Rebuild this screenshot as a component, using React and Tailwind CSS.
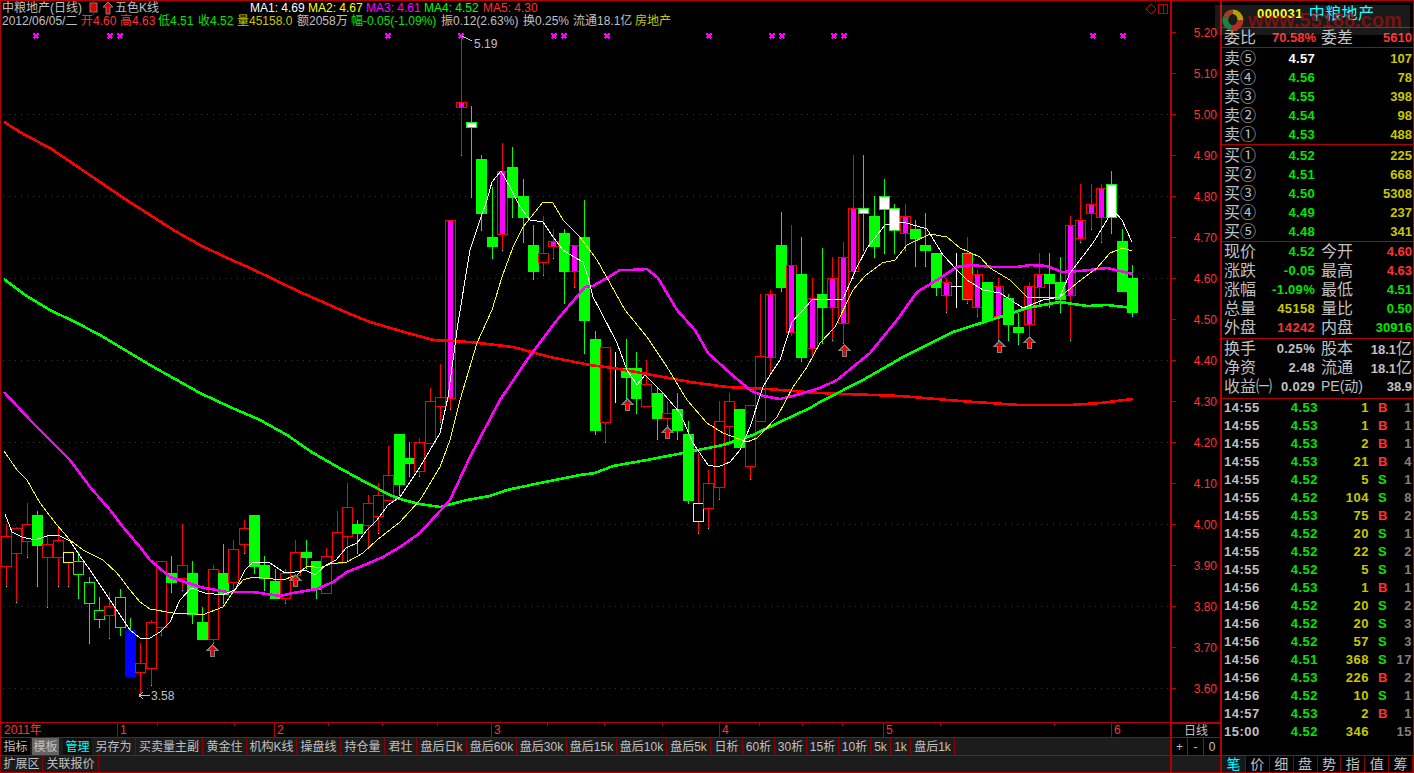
import React from "react";

const C = [
["r",524,536,566,586],["r",527,528,553,602],["r",503,524,541,557],["g",511,515,545,586],["r",535,544,557,607],["r",528,540,557,586],["y",552,552,562,586],["h",552,561,574,598],["h",577,582,603,643],["h",597,610,619,627],
["r",592,606,615,638],["h",589,597,627,635],["b",618,630,676,676],["r",643,663,672,695],["r",620,622,668,685],["r",561,561,627,635],["g",556,573,582,592],["r",524,565,578,590],["g",561,573,614,623],["g",607,622,639,639],
["r",565,569,639,643],["g",544,573,594,603],["r",540,549,582,592],["r",520,528,544,553],["g",515,515,566,573],["g",556,565,578,590],["g",569,581,598,598],["r",569,573,598,603],["r",540,552,575,575],["g",540,552,557,568],
["g",561,561,589,598],["r",548,556,593,593],["r",511,532,563,563],["r",483,507,536,560],["g",520,524,533,553],["r",495,503,525,548],["r",483,495,516,533],["r",446,475,500,500],["g",434,434,484,495],["g",442,458,463,476],
["r",438,442,471,476],["r",388,401,443,443],["r",364,397,406,422],["m",220,220,398,409],["m",38,102,107,155],["w",106,122,127,197],["g",155,159,213,230],["g",187,237,246,258],["m",143,171,234,250],["g",147,167,197,217],
["g",179,196,217,242],["g",225,245,271,279],["r",216,253,262,275],["m",229,241,246,258],["g",229,233,271,303],["m",245,245,271,287],["g",200,237,320,353],["g",331,339,430,434],["r",347,347,422,442],["c",352,368,368,402],
["g",339,368,377,398],["g",352,368,398,413],["r",360,384,406,406],["g",388,393,418,439],["r",401,413,418,425],["g",393,409,430,439],["g",421,434,500,503],["y",453,503,521,533],["r",470,483,508,528],["r",401,421,487,499],
["r",393,401,426,442],["g",409,409,447,447],["r",405,405,466,479],["r",294,356,421,421],["m",290,294,357,373],["g",212,245,287,291],["m",225,265,332,335],["g",237,274,357,361],["m",278,298,348,357],["g",248,294,307,343],
["m",257,278,307,340],["m",242,257,323,343],["m",155,208,271,278],["w",155,208,213,250],["g",196,216,246,257],["w",179,196,209,253],["w",204,208,230,253],["m",204,216,233,250],["g",220,229,238,266],["g",213,245,250,266],
["g",253,253,287,295],["m",278,282,295,312],["c",253,286,286,307],["R",237,253,299,303],["m",270,274,307,316],["g",282,282,320,320],["m",278,286,316,340],["g",294,298,324,340],["g",313,327,332,344],["m",282,286,324,336],
["m",253,274,287,303],["g",253,274,283,307],["g",257,282,299,312],["m",216,225,295,340],["m",184,220,238,242],["m",184,204,213,229],["m",184,188,217,242],["w",171,184,217,233],["g",229,241,291,291],["g",265,278,312,316],
];

const ma1 = "5,514 12,532 22,537 35,540 50,535 60,536 70,541 80,556 90,570 100,585 110,600 120,615 130,630 140,638 150,638 160,632 170,622 180,600 191,588 205,593 222,595 235,590 245,570 253,562 270,563 285,573 295,572 305,570 315,575 326,565 336,560 346,548 357,543 367,530 377,520 388,505 400,497 420,467 440,433 448,397 458,323 470,250 480,220 487,200 492,182 501,171 510,187 520,207 530,220 543,222 553,237 563,250 574,257 583,262 588,277 593,297 600,310 617,343 627,370 637,385 645,375 663,393 680,413 693,443 708,465 718,467 730,462 740,450 750,427 763,387 772,372 780,360 792,322 812,300 843,299 857,267 867,248 885,225 903,222 927,229 943,255 957,270 967,280 983,290 1000,293 1023,308 1043,300 1060,297 1070,273 1093,243 1113,210 1122,220 1132,242";
const ma2 = "4,451 17,470 27,480 40,503 57,525 70,540 83,550 103,560 117,573 130,590 140,602 150,609 173,613 190,613 202,615 223,607 233,592 243,580 253,577 283,580 297,575 307,566 320,568 330,564 347,562 363,553 377,540 400,522 420,500 440,467 450,440 460,400 477,343 492,310 502,277 513,247 523,227 543,202 553,203 563,220 580,237 597,260 610,283 625,310 647,337 667,367 687,400 707,423 723,433 747,442 757,438 777,417 793,387 807,367 820,343 835,327 853,290 865,276 882,263 895,260 907,245 930,234 947,237 960,248 980,257 990,268 1010,280 1027,297 1060,297 1077,283 1097,268 1110,253 1123,248 1132,251";
const ma3 = "4,392 30,420 50,440 70,460 90,487 110,510 123,527 140,547 150,560 170,577 200,587 227,592 253,592 280,596 293,593 317,589 333,582 347,572 367,564 383,557 400,547 420,533 450,500 470,457 500,400 527,360 557,320 585,287 593,286 607,278 620,270 630,270 647,269 658,278 677,310 695,330 708,353 730,373 750,390 763,396 780,399 797,395 820,388 837,380 870,353 897,320 917,292 937,280 957,267 970,265 993,267 1017,267 1030,265 1047,266 1062,272 1080,271 1107,268 1133,274";
const ma4 = "4,279 25,295 50,310 75,322 100,335 125,350 150,365 175,379 200,393 230,407 260,420 287,435 313,453 343,470 367,483 390,495 403,500 420,504 440,507 467,500 490,496 507,490 540,483 580,475 595,473 613,466 647,460 683,453 723,445 753,435 780,422 810,408 820,402 863,380 903,357 953,332 1000,317 1027,308 1060,302 1087,306 1107,305 1133,308";
const ma5 = "4,122 25,135 50,148 75,165 100,182 125,199 150,215 175,231 200,245 225,257 250,268 275,280 300,292 325,303 350,314 370,322 390,328 433,340 470,342 513,347 550,357 590,365 613,368 647,374 690,382 727,387 767,389 820,393 900,396 960,401 1020,405 1070,405 1100,403 1133,399";

const marks = [36,110,120,388,461,554,564,607,709,772,782,834,844,1093,1123];
const arrows = [[212,645],[295,575],[627,399],[667,427],[844,345],[999,341],[1029,337]];
const grid = [114,196,278,360,442,524,606,688];
const prices = ["5.20","5.10","5.00","4.90","4.80","4.70","4.60","4.50","4.40","4.30","4.20","4.10","4.00","3.90","3.80","3.70","3.60"];

function Candle({ d, i }) {
  const [k, hi, top, bot, lo] = d;
  const x = Math.round(6 + 10.33 * i);
  const wick = k === "r" || k === "m" || k === "y" || k === "R" ? "#ff0000" : k === "c" ? "#ffffff" : "#00ff00";
  const l = x - 5;
  const h = bot - top + 1;
  const outline = { r: "#ff0000", m: "#ff0000", y: "#ffff00", h: "#00ff00", w: "#00ff00", R: "#00ff00", g: "#00ff00", b: "#0000ff" }[k];
  const inner = { r: "#000000", m: "#000000", y: "#000000", h: "#000000", w: "#ffffff", R: "#ff0000" }[k];
  return (
    <g>
      <rect x={x} y={hi} width="1" height={lo - hi + 1} fill={wick} />
      {lo > bot + 3 && k !== "c" && <rect x={x} y={lo} width="1" height="1" fill="#00ffff" />}
      {outline && <rect x={l} y={top} width="11" height={h} fill={outline} />}
      {inner && <rect x={l + 1} y={top + 1} width="9" height={h - 2} fill={inner} />}
      {k === "m" && <rect x={l + 3} y={top + 1} width="5" height={h - 2} fill="#ff00ff" />}
      {k === "c" && <rect x={l} y={top} width="11" height="1" fill="#ffffff" />}
    </g>
  );
}

function Chart() {
  return (
    <svg viewBox="1 1 1169 721" shapeRendering="crispEdges" className="absolute inset-0 w-full h-full">
      {grid.map((y) => (
        <line key={y} x1="3" x2="1170" y1={y + 0.5} y2={y + 0.5} stroke="#c00000" strokeDasharray="1 5" />
      ))}
      {marks.map((x) => (
        <path key={x} d={`M${x - 2.5} 33.5 L${x + 2.5} 38.5 M${x + 2.5} 33.5 L${x - 2.5} 38.5`} stroke="#ff00ff" strokeWidth="2" />
      ))}
      {C.map((d, i) => (
        <Candle key={i} d={d} i={i} />
      ))}
      <polyline points={ma5} fill="none" stroke="#ff0000" strokeWidth="2.6" />
      <polyline points={ma4} fill="none" stroke="#00ff00" strokeWidth="2.6" />
      <polyline points={ma3} fill="none" stroke="#ff00ff" strokeWidth="2.6" />
      <polyline points={ma2} fill="none" stroke="#ffff00" strokeWidth="1" />
      <polyline points={ma1} fill="none" stroke="#ffffff" strokeWidth="1" />
      {arrows.map(([x, y]) => (
        <path key={x} d={`M${x + 0.5} ${y} L${x + 5.5} ${y + 5} L${x + 2.5} ${y + 5} L${x + 2.5} ${y + 11} L${x - 1.5} ${y + 11} L${x - 1.5} ${y + 5} L${x - 4.5} ${y + 5} Z`} fill="#f00000" stroke="#808080" />
      ))}
      <polyline points="462,36 472,41" fill="none" stroke="#c0c0c0" />
      <path d="M139 695.5 L150 695.5 M139 695.5 L143 692.5 M139 695.5 L143 698.5" stroke="#c0c0c0" fill="none" />
    </svg>
  );
}

function Plain({ children, w }) {
  return <span style={{ width: w }} className="shrink-0 whitespace-nowrap">{children}</span>;
}

function ChartHeader() {
  return (
    <div className="relative text-[12px] leading-[13px] pl-px text-[#c0c0c0]">
      <div className="flex items-center h-[14px]">
        <span className="w-[86px] shrink-0">中粮地产(日线)</span>
        <svg width="14" height="14" viewBox="0 0 14 14" className="shrink-0">
          <rect x="2" y="2" width="7" height="9" fill="#e00000" stroke="#808080" />
          <line x1="5.5" x2="5.5" y1="0" y2="14" stroke="#e00000" />
        </svg>
        <svg width="13" height="14" viewBox="0 0 13 14" className="shrink-0">
          <path d="M6 1 L11 6 L8 6 L8 13 L4 13 L4 6 L1 6 Z" fill="#e00000" stroke="#808080" />
        </svg>
        <span className="w-[135px] shrink-0">五色K线</span>
        <span className="w-[58px] shrink-0 text-[#ffffff]">MA1: 4.69</span>
        <span className="w-[58px] shrink-0 text-[#ffff00]">MA2: 4.67</span>
        <span className="w-[58px] shrink-0 text-[#ff00ff]">MA3: 4.61</span>
        <span className="w-[59px] shrink-0 text-[#00ff00]">MA4: 4.52</span>
        <span className="text-[#ff3232]">MA5: 4.30</span>
      </div>
      <div className="flex items-center h-[13px]">
        <Plain w={79}>2012/06/05/二</Plain>
        <span className="w-[39px] shrink-0 text-[#ff3232]">开4.60</span>
        <span className="w-[38px] shrink-0 text-[#ff3232]">高4.63</span>
        <span className="w-[40px] shrink-0 text-[#00e600]">低4.51</span>
        <span className="w-[39px] shrink-0 text-[#00e600]">收4.52</span>
        <span className="w-[60px] shrink-0 text-[#c8c800]">量45158.0</span>
        <Plain w={54}>额2058万</Plain>
        <span className="w-[90px] shrink-0 text-[#00e600] whitespace-nowrap">幅-0.05(-1.09%)</span>
        <Plain w={82}>振0.12(2.63%)</Plain>
        <Plain w={50}>换0.25%</Plain>
        <Plain w={62}>流通18.1亿</Plain>
        <span className="text-[#c8c800] whitespace-nowrap">房地产</span>
      </div>
    </div>
  );
}

function PriceAxis() {
  return (
    <div className="w-[50px] shrink-0 border-l-2 border-t border-[#b40000] pt-[11px] flex flex-col">
      {prices.map((p) => (
        <div key={p} className="flex items-center h-[41px] shrink-0 text-[12px] text-[#ff3232] pr-[3px]">
          <span className="w-[4px] h-px bg-[#c00000]" />
          <span className="ml-auto">{p}</span>
        </div>
      ))}
    </div>
  );
}

const months = [["2011年", 116], ["1", 157], ["2", 217], ["3", 228], ["4", 164], ["5", 228], ["6", 58]];
const ticks = [157, 234, 328, 382, 437, 547, 604, 662, 759, 802, 842, 940, 1054];

function MonthAxis() {
  return (
    <div className="relative flex h-[15px] border-t border-l border-[#b40000] text-[12px] text-[#ff3232]">
      {months.map(([m, w], i) => (
        <div key={m} style={{ width: w }} className={`shrink-0 flex items-center ${i ? "pl-[2px] border-l border-[#b40000]" : "pl-[3px]"}`}>
          {m}
        </div>
      ))}
      <svg viewBox="1 0 1169 3" className="absolute left-0 top-0 w-[1169px] h-[3px]">
        {ticks.map((t) => (
          <rect key={t} x={t} y="0" width="1" height="3" fill="#b40000" />
        ))}
      </svg>
    </div>
  );
}

const tabs = [
  ["指标", 29, "bg-[#000000]"], ["", 2, "bg-[#1c1c1c]"], ["模板", 27, "bg-[#646464]"], ["", 4, "bg-[#1c1c1c]"], ["管理", 29, "bg-[#101010] text-[#00ffff]"],
  ["另存为", 44], ["买卖量主副", 67], ["黄金住", 44], ["机构K线", 50], ["操盘线", 44], ["持仓量", 44], ["君壮", 32], ["盘后日k", 50],
  ["盘后60k", 50], ["盘后30k", 50], ["盘后15k", 50], ["盘后10k", 50], ["盘后5k", 44], ["日析", 32], ["60析", 32], ["30析", 32], ["15析", 32], ["10析", 32], ["5k", 20], ["1k", 20], ["盘后1k", 44],
];

function TabRow() {
  return (
    <div className="flex h-[18px] border-t border-[#b40000] bg-[#1c1c1c]">
      <div className="w-[1170px] shrink-0 flex border-l border-[#b40000] text-[12px] text-[#c0c0c0]">
        {tabs.map(([t, w, c], i) => (
          <div key={i} style={{ width: w }} className={`shrink-0 flex items-center justify-center whitespace-nowrap ${c || "border-r border-[#8b0000]"}`}>
            {t}
          </div>
        ))}
      </div>
      <div className="flex-1 flex bg-[#000000] border-l-2 border-[#b40000] text-[12px] text-[#c0c0c0]">
        <div className="w-[16px] flex items-center justify-center border-r border-[#b40000]">+</div>
        <div className="w-[16px] flex items-center justify-center border-r border-[#b40000]">-</div>
        <div className="flex-1 flex items-center justify-center">0</div>
      </div>
    </div>
  );
}

function Row2() {
  return (
    <div className="flex h-[18px] border-t border-b border-[#b40000] bg-[#1c1c1c] text-[12px] text-[#c0c0c0]">
      <div className="w-[43px] flex items-center justify-center border-l border-r border-[#8b0000]">扩展区</div>
      <div className="w-[56px] flex items-center justify-center border-r border-[#8b0000]">关联报价</div>
      <div className="ml-[1071px] border-l-2 border-[#b40000]" />
    </div>
  );
}

const GR = "text-[#00e600]";
const RD = "text-[#ff3232]";
const YL = "text-[#c8c800]";
const WH = "text-[#ffffff]";
const GY = "text-[#c0c0c0]";

const asks = [["卖⑤", "4.57", WH, "107"], ["卖④", "4.56", GR, "78"], ["卖③", "4.55", GR, "398"], ["卖②", "4.54", GR, "98"], ["卖①", "4.53", GR, "488"]];
const bids = [["买①", "4.52", "225"], ["买②", "4.51", "668"], ["买③", "4.50", "5308"], ["买④", "4.49", "237"], ["买⑤", "4.48", "341"]];
const stats = [
  ["现价", "4.52", GR, "今开", "4.60", RD], ["涨跌", "-0.05", GR, "最高", "4.63", RD], ["涨幅", "-1.09%", GR, "最低", "4.51", GR],
  ["总量", "45158", YL, "量比", "0.50", GR], ["外盘", "14242", RD, "内盘", "30916", GR],
];
const tradeData = [
  ["14:55","4.53","1","B","1"],["14:55","4.53","1","B","1"],["14:55","4.53","2","B","1"],["14:55","4.53","21","B","4"],["14:55","4.52","5","S","1"],
  ["14:55","4.52","104","S","8"],["14:55","4.53","75","B","2"],["14:55","4.52","20","S","1"],["14:55","4.52","22","S","2"],["14:55","4.52","5","S","1"],
  ["14:56","4.53","1","B","1"],["14:56","4.52","20","S","2"],["14:56","4.52","20","S","3"],["14:56","4.52","57","S","3"],["14:56","4.51","368","S","17"],
  ["14:56","4.53","226","B","2"],["14:56","4.52","10","S","1"],["14:57","4.53","2","B","1"],["15:00","4.52","346","","15"],
];

function BookRow({ label, price, cls, vol }) {
  return (
    <div className="flex items-center h-[19px] shrink-0 pl-[2px] pr-px">
      <span className="w-[53px] shrink-0 text-[16px] font-normal text-[#c0c0c0]">{label}</span>
      <span className={`w-[38px] shrink-0 text-right tracking-[0.3px] ${cls}`}>{price}</span>
      <span className={`flex-1 text-right ${YL}`}>{vol}</span>
    </div>
  );
}

function StatRow({ a, b, c, d, e, f, dc = "" }) {
  return (
    <div className="flex items-center h-[19px] shrink-0 pl-[2px] pr-px">
      <span className="w-[32px] shrink-0 text-[16px] font-normal text-[#c0c0c0] whitespace-nowrap">{a}</span>
      <span className={`w-[59px] shrink-0 text-right tracking-[0.3px] ${c}`}>{b}</span>
      <span className={`ml-[6px] w-[32px] shrink-0 font-normal text-[#c0c0c0] whitespace-nowrap ${dc || "text-[16px]"}`}>{d}</span>
      <span className={`flex-1 text-right whitespace-nowrap ${f}`}>{e}</span>
    </div>
  );
}

function Logo() {
  return (
    <svg width="26" height="26" viewBox="0 0 30 30" className="absolute left-[5px] top-[2px]">
      <path d="M15 3 A12 12 0 0 1 27 15 L20 15 A6 6 0 0 0 15 8 Z" fill="#b8a000" />
      <path d="M27 15 A12 12 0 0 1 12 27 L14 21 A6 6 0 0 0 20 15 Z" fill="#b03020" />
      <path d="M12 27 A12 12 0 0 1 4 10 L10 13 A6 6 0 0 0 14 21 Z" fill="#1f8040" />
      <path d="M4 10 A12 12 0 0 1 15 3 L15 8 A6 6 0 0 0 10 13 Z" fill="#a04020" />
    </svg>
  );
}

const Yi = () => <span className="text-[16px] font-normal">亿</span>;

function RightPanel() {
  return (
    <div className="flex-1 flex flex-col border-l-2 border-r border-t border-b border-[#b40000] text-[13px] font-bold relative">
      <div className="relative h-[27px] shrink-0 border-b border-[#b40000] flex items-center pl-[35px] text-[13px] tracking-[0.4px]">
        <span className="text-[#ffff00]">000031</span>
        <span className="ml-[6px] text-[16px] font-normal text-[#00ffff]">中粮地产</span>
      </div>
      <div className="flex items-center h-[20px] shrink-0 border-b border-[#b40000] pl-[2px] pr-px">
        <span className="w-[32px] shrink-0 text-[16px] font-normal text-[#c0c0c0]">委比</span>
        <span className={`w-[60px] shrink-0 text-right ${RD}`}>70.58%</span>
        <span className="ml-[5px] w-[32px] shrink-0 text-[16px] font-normal text-[#c0c0c0]">委差</span>
        <span className={`flex-1 text-right ${RD}`}>5610</span>
      </div>
      <div className="h-[97px] shrink-0 border-b border-[#b40000] pt-px">
        {asks.map(([l, p, c, v]) => (
          <BookRow key={l} label={l} price={p} cls={c} vol={v} />
        ))}
      </div>
      <div className="h-[97px] shrink-0 border-b border-[#b40000] pt-px">
        {bids.map(([l, p, v]) => (
          <BookRow key={l} label={l} price={p} cls={GR} vol={v} />
        ))}
      </div>
      <div className="h-[97px] shrink-0 border-b border-[#b40000]">
        {stats.map(([a, b, c, d, e, f]) => (
          <StatRow key={a} a={a} b={b} c={c} d={d} e={e} f={f} />
        ))}
      </div>
      <div className="h-[60px] shrink-0 border-b border-[#b40000]">
        <StatRow a="换手" b="0.25%" c={GY} d="股本" e={<>18.1<Yi /></>} f={GY} />
        <StatRow a="净资" b="2.48" c={GY} d="流通" e={<>18.1<Yi /></>} f={GY} />
        <StatRow a="收益㈠" b="0.029" c={GY} d="PE(动)" dc="text-[14px]" e="38.9" f={GY} />
      </div>
      <div className="flex-1 text-[13px] tracking-[0.5px]">
        {tradeData.map((t, i) => (
          <div key={i} className="flex items-center h-[18px] pl-[2px]">
            <span className="w-[41px] shrink-0 text-[#c0c0c0]">{t[0]}</span>
            <span className={`w-[53px] shrink-0 text-right ${GR}`}>{t[1]}</span>
            <span className={`w-[51px] shrink-0 text-right ${YL}`}>{t[2]}</span>
            <span className={`ml-[9px] w-[10px] shrink-0 ${t[3] === "B" ? RD : GR}`}>{t[3]}</span>
            <span className="flex-1 text-right text-[#808080] pr-px">{t[4]}</span>
          </div>
        ))}
      </div>
      <div className="flex h-[17px] shrink-0 border-t border-[#b40000] text-[14px] font-normal text-[#c0c0c0] bg-[#000000]">
        {["笔", "价", "细", "盘", "势", "指", "值", "筹"].map((t, i) => (
          <div key={t} className={`flex-1 flex items-center justify-center border-r border-[#8b0000] ${i === 0 ? "bg-[#101820] text-[#00ffff]" : ""}`}>
            {t}
          </div>
        ))}
      </div>
      <div className="absolute left-[-7px] top-[4px] w-[195px] h-[30px] bg-[#ffffff]/[0.1] pointer-events-none overflow-hidden">
        <Logo />
        <span className="absolute left-[33px] top-[2px] text-[20px] leading-[26px] font-bold text-[#a01010]/70 whitespace-nowrap">www.55188.com</span>
      </div>
    </div>
  );
}

export default function App() {
  return (
    <div className="w-[1414px] h-[773px] bg-[#000000] flex overflow-hidden font-['Liberation_Sans','Noto_Sans_CJK_SC',sans-serif]">
      <div className="w-[1220px] shrink-0 flex flex-col">
        <div className="flex h-[722px] shrink-0">
          <div className="relative w-[1170px] shrink-0 border-t border-l border-[#b40000]">
            <Chart />
            <ChartHeader />
            <span className="absolute left-[473px] top-[37px] text-[12px] leading-[13px] text-[#c0c0c0]">5.19</span>
            <span className="absolute left-[150px] top-[689px] text-[12px] leading-[13px] text-[#c0c0c0]">3.58</span>
            <svg width="26" height="14" viewBox="0 0 26 14" className="absolute left-[1143px] top-[1px]">
              <path d="M7 2 L12 7 L7 12 L2 7 Z" fill="none" stroke="#c00000" />
              <rect x="14.5" y="2.5" width="9" height="9" fill="none" stroke="#c00000" />
              <line x1="19.5" x2="19.5" y1="2" y2="12" stroke="#c00000" />
            </svg>
          </div>
          <PriceAxis />
        </div>
        <div className="flex h-[15px] shrink-0">
          <div className="w-[1170px] shrink-0">
            <MonthAxis />
          </div>
          <div className="flex-1 flex items-center justify-center border-l-2 border-t-2 border-[#b40000] text-[12px] text-[#c0c0c0]">日线</div>
        </div>
        <TabRow />
        <Row2 />
      </div>
      <RightPanel />
    </div>
  );
}
